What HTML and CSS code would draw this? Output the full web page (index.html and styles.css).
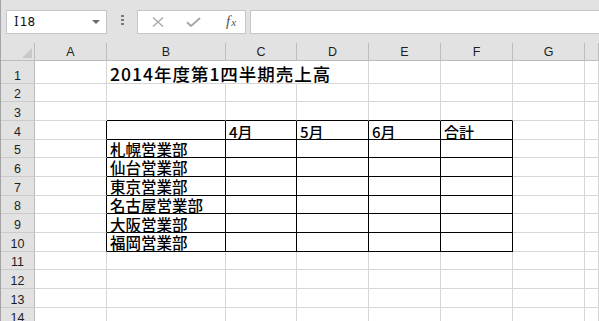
FILE: index.html
```html
<!DOCTYPE html>
<html lang="ja">
<head>
<meta charset="utf-8">
<title>Sheet</title>
<link rel="stylesheet" href="styles.css">
</head>
<body>
<div class="app">
  <div class="toolbar">
    <div class="namebox"><span class="ref"><span class="ref-i">I</span>18</span><span class="caret"></span></div>
    <div class="dots"><i></i><i></i><i></i></div>
    <div class="fxbox">
      <svg class="ico" width="12" height="10" viewBox="0 0 12 10"><path d="M1 0.5L11 9.5M11 0.5L1 9.5" stroke="#a9a9a9" stroke-width="1.4" fill="none"/></svg>
      <svg class="ico" width="15" height="10" viewBox="0 0 15 10"><path d="M1 5.2L5 9L14 1" stroke="#a9a9a9" stroke-width="2" fill="none"/></svg>
      <span class="fx"><i>f</i><i class="x">x</i></span>
    </div>
    <div class="formula"></div>
  </div>
  <div class="sheet">
    <div class="corner"><span class="tri"></span></div>
    <div class="ch">A</div><div class="ch">B</div><div class="ch">C</div><div class="ch">D</div><div class="ch">E</div><div class="ch">F</div><div class="ch">G</div><div class="ch"></div>

    <div class="rh">1</div><div class="c"></div><div class="c nr txt title">2014年度第1四半期売上高</div><div class="c nr"></div><div class="c"></div><div class="c"></div><div class="c"></div><div class="c"></div><div class="c"></div>

    <div class="rh">2</div><div class="c"></div><div class="c"></div><div class="c"></div><div class="c"></div><div class="c"></div><div class="c"></div><div class="c"></div><div class="c"></div>

    <div class="rh">3</div><div class="c"></div><div class="c bb"></div><div class="c bb"></div><div class="c bb"></div><div class="c bb"></div><div class="c bb"></div><div class="c"></div><div class="c"></div>

    <div class="rh">4</div><div class="c rb"></div><div class="c t"></div><div class="c t txt hd">4月</div><div class="c t txt hd">5月</div><div class="c t txt hd">6月</div><div class="c t txt hd">合計</div><div class="c"></div><div class="c"></div>

    <div class="rh">5</div><div class="c rb"></div><div class="c t txt">札幌営業部</div><div class="c t"></div><div class="c t"></div><div class="c t"></div><div class="c t"></div><div class="c"></div><div class="c"></div>

    <div class="rh">6</div><div class="c rb"></div><div class="c t txt">仙台営業部</div><div class="c t"></div><div class="c t"></div><div class="c t"></div><div class="c t"></div><div class="c"></div><div class="c"></div>

    <div class="rh">7</div><div class="c rb"></div><div class="c t txt">東京営業部</div><div class="c t"></div><div class="c t"></div><div class="c t"></div><div class="c t"></div><div class="c"></div><div class="c"></div>

    <div class="rh">8</div><div class="c rb"></div><div class="c t txt">名古屋営業部</div><div class="c t"></div><div class="c t"></div><div class="c t"></div><div class="c t"></div><div class="c"></div><div class="c"></div>

    <div class="rh">9</div><div class="c rb"></div><div class="c t txt">大阪営業部</div><div class="c t"></div><div class="c t"></div><div class="c t"></div><div class="c t"></div><div class="c"></div><div class="c"></div>

    <div class="rh">10</div><div class="c rb"></div><div class="c t txt">福岡営業部</div><div class="c t"></div><div class="c t"></div><div class="c t"></div><div class="c t"></div><div class="c"></div><div class="c"></div>

    <div class="rh">11</div><div class="c"></div><div class="c"></div><div class="c"></div><div class="c"></div><div class="c"></div><div class="c"></div><div class="c"></div><div class="c"></div>

    <div class="rh">12</div><div class="c"></div><div class="c"></div><div class="c"></div><div class="c"></div><div class="c"></div><div class="c"></div><div class="c"></div><div class="c"></div>

    <div class="rh">13</div><div class="c"></div><div class="c"></div><div class="c"></div><div class="c"></div><div class="c"></div><div class="c"></div><div class="c"></div><div class="c"></div>

    <div class="rh">14</div><div class="c"></div><div class="c"></div><div class="c"></div><div class="c"></div><div class="c"></div><div class="c"></div><div class="c"></div><div class="c"></div>
  </div>
</div>
</body>
</html>
```

FILE: styles.css
```css
html, body {
  margin: 0;
  padding: 0;
  background: #ffffff;
}

body {
  font-family: "Liberation Sans", "Noto Sans CJK JP", sans-serif;
  color: #1a1a1a;
}

.app {
  width: 599px;
  height: 321px;
  overflow: hidden;
  box-sizing: border-box;
  border-left: 1px solid #a4a4a4;
  background: #ffffff;
}

/* ---------- toolbar ---------- */
.toolbar {
  height: 43px;
  box-sizing: border-box;
  background: #e2e2e2;
  display: flex;
  align-items: flex-start;
  padding: 10px 0 0 5px;
}

.namebox {
  width: 101px;
  height: 24px;
  box-sizing: border-box;
  border: 1px solid #c6c6c6;
  background: #ffffff;
  display: flex;
  align-items: center;
  justify-content: space-between;
  padding: 0 6px 0 7px;
}

.ref {
  font-family: "DejaVu Sans", "Liberation Sans", sans-serif;
  font-size: 12px;
  color: #111;
}

.ref-i {
  font-family: "DejaVu Serif", "Liberation Serif", serif;
  margin-right: 1px;
}

.caret {
  width: 0;
  height: 0;
  border-left: 4px solid transparent;
  border-right: 4px solid transparent;
  border-top: 4px solid #6a6a6a;
}

.dots {
  margin: 5px 0 0 14px;
  width: 3px;
  display: flex;
  flex-direction: column;
  gap: 2px;
}

.dots i {
  display: block;
  width: 3px;
  height: 2px;
  background: #7a7a7a;
}

.fxbox {
  margin-left: 13px;
  width: 109px;
  height: 24px;
  box-sizing: border-box;
  border: 1px solid #c6c6c6;
  background: #ffffff;
  display: flex;
  align-items: center;
  padding: 0 0 0 14px;
  gap: 22px;
}

.ico {
  display: block;
}

.fx {
  font-family: "Liberation Serif", serif;
  font-size: 15px;
  color: #555;
  margin-left: 3px;
  margin-top: -2px;
}

.fx i {
  font-style: italic;
}

.fx .x {
  font-size: 11px;
  margin-left: 1px;
}

.formula {
  margin-left: 4px;
  flex: 1;
  height: 24px;
  box-sizing: border-box;
  border: 1px solid #c6c6c6;
  border-right: none;
  background: #ffffff;
}

/* ---------- sheet ---------- */
.sheet {
  display: grid;
  grid-template-columns: 34px 72px 119px 71px 72px 72px 72px 72px 1fr;
  grid-template-rows: 18px 22.5px repeat(13, 18.7px);
  background: #ffffff;
}

.corner,
.ch,
.rh {
  background: #e2e2e2;
  box-sizing: border-box;
  font-family: "Liberation Sans", sans-serif;
  font-size: 12.5px;
  color: #1e1e1e;
}

.corner {
  border-right: 1px solid #bcbcbc;
  border-bottom: 1px solid #bcbcbc;
  position: relative;
}

.tri {
  position: absolute;
  right: 2px;
  bottom: 2px;
  width: 0;
  height: 0;
  border-left: 10px solid transparent;
  border-bottom: 10px solid #c8c8c8;
}

.ch {
  border-right: 1px solid #bdbdbd;
  border-bottom: 1px solid #bcbcbc;
  display: flex;
  align-items: center;
  justify-content: center;
  padding-top: 1px;
}

.rh {
  border-right: 1px solid #bcbcbc;
  border-bottom: 1px solid #cbcbcb;
  display: flex;
  align-items: flex-end;
  justify-content: center;
  line-height: 13px;
  padding-bottom: 0;
}

.c {
  box-sizing: border-box;
  border-right: 1px solid #d6d6d6;
  border-bottom: 1px solid #d6d6d6;
  min-width: 0;
}

.c.nr {
  border-right-color: transparent;
}

.c.bb {
  border-bottom-color: #000;
}

.c.rb {
  border-right-color: #000;
}

.c.t {
  border-right-color: #000;
  border-bottom-color: #000;
}

.txt {
  display: flex;
  align-items: flex-end;
  padding-left: 3px;
  font-family: "Noto Sans CJK JP", "Liberation Sans", sans-serif;
  font-size: 15.5px;
  font-weight: 500;
  line-height: 1;
  white-space: nowrap;
  color: #000;
  overflow: visible;
}

.title {
  font-size: 17.5px;
  letter-spacing: 1px;
  padding-bottom: 0;
}

.hd {
  font-size: 15px;
}
```
